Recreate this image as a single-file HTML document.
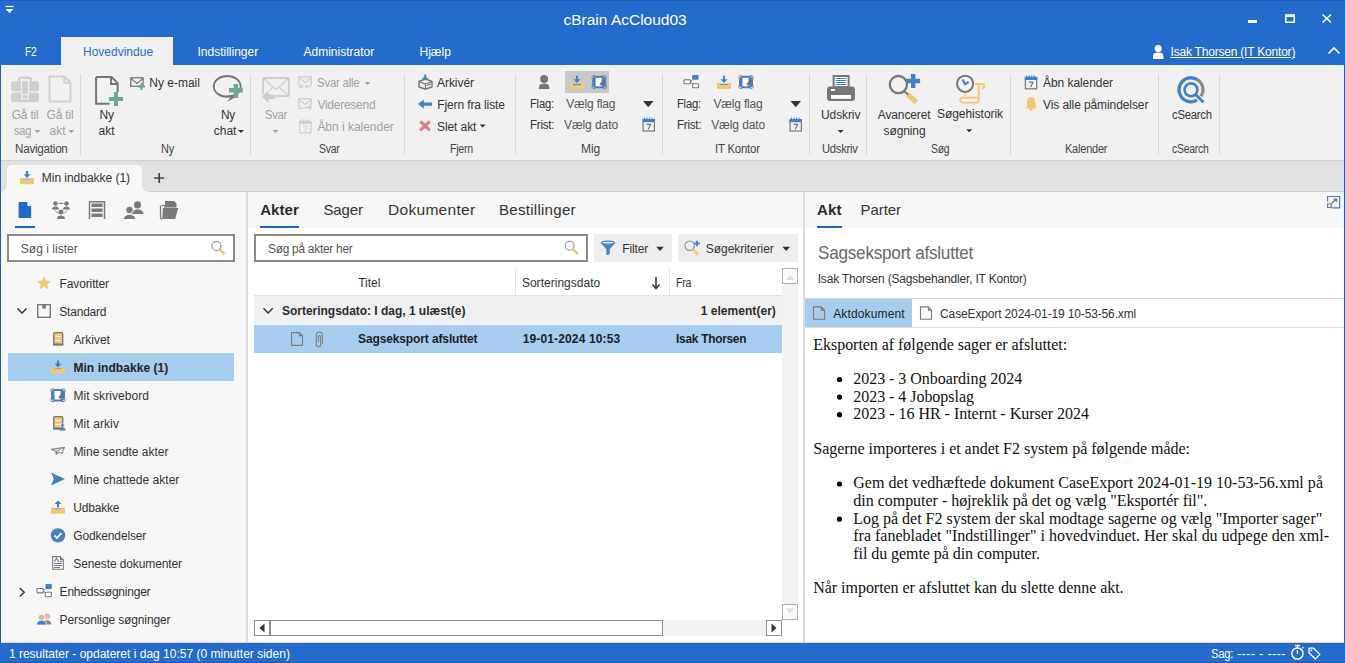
<!DOCTYPE html>
<html><head><meta charset="utf-8"><title>cBrain AcCloud03</title>
<style>
html,body{margin:0;padding:0;}
body{width:1345px;height:663px;overflow:hidden;position:relative;background:#fff;font-family:"Liberation Sans",sans-serif;}
.r{position:absolute;}
.t{position:absolute;white-space:nowrap;}
svg.ov{position:absolute;left:0;top:0;}
</style></head><body>
<div class="r" style="left:0px;top:0px;width:1345px;height:65px;background:#236ccb;"></div>
<div class="r" style="left:0px;top:0px;width:1345px;height:1px;background:#1d5db3;"></div>
<div class="r" style="left:61px;top:37px;width:112px;height:28px;background:#f1f1f1;"></div>
<div class="r" style="left:0px;top:65px;width:1345px;height:95px;background:#f1f1f1;"></div>
<div class="r" style="left:0px;top:160px;width:1345px;height:1px;background:#d0d0d0;"></div>
<div class="r" style="left:0px;top:161px;width:1345px;height:30px;background:#e1e1e1;"></div>
<div class="r" style="left:0px;top:191px;width:1345px;height:1px;background:#cbcbcb;"></div>
<div class="r" style="left:0px;top:192px;width:247px;height:451px;background:#f7f7f7;"></div>
<div class="r" style="left:246px;top:192px;width:2px;height:451px;background:#dcdcdc;"></div>
<div class="r" style="left:248px;top:192px;width:556px;height:451px;background:#ffffff;"></div>
<div class="r" style="left:248px;top:192px;width:556px;height:36px;background:#f7f7f7;"></div>
<div class="r" style="left:803px;top:192px;width:2px;height:451px;background:#dcdcdc;"></div>
<div class="r" style="left:805px;top:192px;width:540px;height:451px;background:#ffffff;"></div>
<div class="r" style="left:805px;top:192px;width:540px;height:36px;background:#f7f7f7;"></div>
<div class="r" style="left:0px;top:643px;width:1345px;height:20px;background:#236ccb;"></div>
<div class="r" style="left:0px;top:642px;width:1345px;height:1px;background:#dcd6cf;"></div>
<div class="r" style="left:0px;top:65px;width:1px;height:578px;background:#1d5db3;"></div>
<div class="r" style="left:1344px;top:65px;width:1px;height:578px;background:#1d5db3;"></div>
<div class="r" style="left:0px;top:662px;width:1345px;height:1px;background:#1d5db3;"></div>
<div class="t" style="left:563.5px;top:11.88px;font-size:15.5px;line-height:15.5px;color:#ffffff;font-weight:normal;font-family:'Liberation Sans';">cBrain AcCloud03</div>
<div class="r" style="left:1248px;top:20px;width:9px;height:3px;background:#ffffff;"></div>
<div class="t" style="left:24.6px;top:45.84px;font-size:12px;line-height:12px;color:#fff;font-weight:normal;font-family:'Liberation Sans';letter-spacing:-0.250px;transform:scaleX(0.8583);transform-origin:0 0;">F2</div>
<div class="t" style="left:83px;top:45.84px;font-size:12px;line-height:12px;color:#2b6fca;font-weight:normal;font-family:'Liberation Sans';">Hovedvindue</div>
<div class="t" style="left:197.5px;top:45.84px;font-size:12px;line-height:12px;color:#fff;font-weight:normal;font-family:'Liberation Sans';">Indstillinger</div>
<div class="t" style="left:303.5px;top:45.84px;font-size:12px;line-height:12px;color:#fff;font-weight:normal;font-family:'Liberation Sans';">Administrator</div>
<div class="t" style="left:419.5px;top:45.84px;font-size:12px;line-height:12px;color:#fff;font-weight:normal;font-family:'Liberation Sans';">Hjælp</div>
<div class="t" style="left:1170.5px;top:46.14px;font-size:12px;line-height:12px;color:#fff;font-weight:normal;font-family:'Liberation Sans';letter-spacing:-0.205px;text-decoration:underline">Isak Thorsen (IT Kontor)</div>
<div class="r" style="left:80px;top:74px;width:1px;height:81px;background:#d9d9d9;"></div>
<div class="r" style="left:250px;top:74px;width:1px;height:81px;background:#d9d9d9;"></div>
<div class="r" style="left:404px;top:74px;width:1px;height:81px;background:#d9d9d9;"></div>
<div class="r" style="left:515px;top:74px;width:1px;height:81px;background:#d9d9d9;"></div>
<div class="r" style="left:662px;top:74px;width:1px;height:81px;background:#d9d9d9;"></div>
<div class="r" style="left:809px;top:74px;width:1px;height:81px;background:#d9d9d9;"></div>
<div class="r" style="left:866px;top:74px;width:1px;height:81px;background:#d9d9d9;"></div>
<div class="r" style="left:1010px;top:74px;width:1px;height:81px;background:#d9d9d9;"></div>
<div class="r" style="left:1158px;top:74px;width:1px;height:81px;background:#d9d9d9;"></div>
<div class="r" style="left:1219px;top:74px;width:1px;height:81px;background:#d9d9d9;"></div>
<div class="t" style="left:14.7px;top:142.74px;font-size:12px;line-height:12px;color:#444444;font-weight:normal;font-family:'Liberation Sans';letter-spacing:-0.250px;transform:scaleX(0.9704);transform-origin:0 0;">Navigation</div>
<div class="t" style="left:160.8px;top:142.74px;font-size:12px;line-height:12px;color:#444444;font-weight:normal;font-family:'Liberation Sans';letter-spacing:-0.250px;transform:scaleX(0.9103);transform-origin:0 0;">Ny</div>
<div class="t" style="left:319px;top:142.74px;font-size:12px;line-height:12px;color:#444444;font-weight:normal;font-family:'Liberation Sans';letter-spacing:-0.250px;transform:scaleX(0.8697);transform-origin:0 0;">Svar</div>
<div class="t" style="left:450px;top:142.74px;font-size:12px;line-height:12px;color:#444444;font-weight:normal;font-family:'Liberation Sans';letter-spacing:-0.250px;transform:scaleX(0.8814);transform-origin:0 0;">Fjern</div>
<div class="t" style="left:581px;top:142.74px;font-size:12px;line-height:12px;color:#444444;font-weight:normal;font-family:'Liberation Sans';letter-spacing:-0.115px;">Mig</div>
<div class="t" style="left:715.3px;top:142.74px;font-size:12px;line-height:12px;color:#444444;font-weight:normal;font-family:'Liberation Sans';letter-spacing:-0.250px;transform:scaleX(0.9533);transform-origin:0 0;">IT Kontor</div>
<div class="t" style="left:822px;top:142.74px;font-size:12px;line-height:12px;color:#444444;font-weight:normal;font-family:'Liberation Sans';letter-spacing:-0.250px;transform:scaleX(0.9303);transform-origin:0 0;">Udskriv</div>
<div class="t" style="left:930.8px;top:142.74px;font-size:12px;line-height:12px;color:#444444;font-weight:normal;font-family:'Liberation Sans';letter-spacing:-0.250px;transform:scaleX(0.8652);transform-origin:0 0;">Søg</div>
<div class="t" style="left:1065px;top:142.74px;font-size:12px;line-height:12px;color:#444444;font-weight:normal;font-family:'Liberation Sans';letter-spacing:-0.250px;transform:scaleX(0.9186);transform-origin:0 0;">Kalender</div>
<div class="t" style="left:1172px;top:142.74px;font-size:12px;line-height:12px;color:#444444;font-weight:normal;font-family:'Liberation Sans';letter-spacing:-0.250px;transform:scaleX(0.8656);transform-origin:0 0;">cSearch</div>
<div class="t" style="left:11.7px;top:109.04px;font-size:12px;line-height:12px;color:#a0a0a0;font-weight:normal;font-family:'Liberation Sans';letter-spacing:-0.203px;transform:scaleX(1.0000);transform-origin:0 0;">Gå til</div>
<div class="t" style="left:13.7px;top:125.04px;font-size:12px;line-height:12px;color:#a0a0a0;font-weight:normal;font-family:'Liberation Sans';letter-spacing:-0.250px;transform:scaleX(0.9243);transform-origin:0 0;">sag</div>
<div class="t" style="left:46.5px;top:109.04px;font-size:12px;line-height:12px;color:#a0a0a0;font-weight:normal;font-family:'Liberation Sans';letter-spacing:-0.169px;">Gå til</div>
<div class="t" style="left:49.6px;top:125.04px;font-size:12px;line-height:12px;color:#a0a0a0;font-weight:normal;font-family:'Liberation Sans';letter-spacing:0.028px;">akt</div>
<div class="t" style="left:99.6px;top:109.04px;font-size:12px;line-height:12px;color:#333333;font-weight:normal;font-family:'Liberation Sans';letter-spacing:-0.136px;">Ny</div>
<div class="t" style="left:98.5px;top:125.04px;font-size:12px;line-height:12px;color:#333333;font-weight:normal;font-family:'Liberation Sans';letter-spacing:-0.005px;">akt</div>
<div class="t" style="left:149.3px;top:76.84px;font-size:12px;line-height:12px;color:#333333;font-weight:normal;font-family:'Liberation Sans';letter-spacing:-0.008px;">Ny e-mail</div>
<div class="t" style="left:221px;top:109.04px;font-size:12px;line-height:12px;color:#333333;font-weight:normal;font-family:'Liberation Sans';letter-spacing:-0.250px;transform:scaleX(0.9879);transform-origin:0 0;">Ny</div>
<div class="t" style="left:213.8px;top:125.04px;font-size:12px;line-height:12px;color:#333333;font-weight:normal;font-family:'Liberation Sans';letter-spacing:-0.047px;">chat</div>
<div class="t" style="left:265px;top:109.04px;font-size:12px;line-height:12px;color:#a0a0a0;font-weight:normal;font-family:'Liberation Sans';letter-spacing:-0.250px;transform:scaleX(0.9288);transform-origin:0 0;">Svar</div>
<div class="t" style="left:317.4px;top:76.84px;font-size:12px;line-height:12px;color:#a0a0a0;font-weight:normal;font-family:'Liberation Sans';letter-spacing:-0.250px;transform:scaleX(0.9564);transform-origin:0 0;">Svar alle</div>
<div class="t" style="left:317.4px;top:98.84px;font-size:12px;line-height:12px;color:#a0a0a0;font-weight:normal;font-family:'Liberation Sans';letter-spacing:-0.250px;transform:scaleX(1.0000);transform-origin:0 0;">Videresend</div>
<div class="t" style="left:317.4px;top:120.84px;font-size:12px;line-height:12px;color:#a0a0a0;font-weight:normal;font-family:'Liberation Sans';letter-spacing:-0.023px;">Åbn i kalender</div>
<div class="t" style="left:437px;top:76.84px;font-size:12px;line-height:12px;color:#333333;font-weight:normal;font-family:'Liberation Sans';letter-spacing:-0.049px;">Arkivér</div>
<div class="t" style="left:437.3px;top:98.84px;font-size:12px;line-height:12px;color:#333333;font-weight:normal;font-family:'Liberation Sans';letter-spacing:-0.124px;">Fjern fra liste</div>
<div class="t" style="left:437px;top:120.84px;font-size:12px;line-height:12px;color:#333333;font-weight:normal;font-family:'Liberation Sans';letter-spacing:-0.091px;">Slet akt</div>
<div class="r" style="left:565px;top:71px;width:44px;height:22px;background:#c8c8c8;"></div>
<div class="t" style="left:529.8px;top:97.84px;font-size:12px;line-height:12px;color:#333333;font-weight:normal;font-family:'Liberation Sans';letter-spacing:-0.250px;transform:scaleX(0.9356);transform-origin:0 0;">Flag:</div>
<div class="t" style="left:566.3px;top:97.84px;font-size:12px;line-height:12px;color:#555;font-weight:normal;font-family:'Liberation Sans';letter-spacing:-0.189px;">Vælg flag</div>
<div class="t" style="left:529.8px;top:118.64px;font-size:12px;line-height:12px;color:#333333;font-weight:normal;font-family:'Liberation Sans';letter-spacing:-0.250px;transform:scaleX(0.9614);transform-origin:0 0;">Frist:</div>
<div class="t" style="left:564px;top:118.64px;font-size:12px;line-height:12px;color:#555;font-weight:normal;font-family:'Liberation Sans';letter-spacing:-0.078px;">Vælg dato</div>
<div class="t" style="left:676.9px;top:97.84px;font-size:12px;line-height:12px;color:#333333;font-weight:normal;font-family:'Liberation Sans';letter-spacing:-0.250px;transform:scaleX(0.9356);transform-origin:0 0;">Flag:</div>
<div class="t" style="left:713.5px;top:97.84px;font-size:12px;line-height:12px;color:#555;font-weight:normal;font-family:'Liberation Sans';letter-spacing:-0.189px;">Vælg flag</div>
<div class="t" style="left:676.9px;top:118.64px;font-size:12px;line-height:12px;color:#333333;font-weight:normal;font-family:'Liberation Sans';letter-spacing:-0.250px;transform:scaleX(0.9614);transform-origin:0 0;">Frist:</div>
<div class="t" style="left:711.2px;top:118.64px;font-size:12px;line-height:12px;color:#555;font-weight:normal;font-family:'Liberation Sans';letter-spacing:-0.078px;">Vælg dato</div>
<div class="t" style="left:821px;top:109.04px;font-size:12px;line-height:12px;color:#333333;font-weight:normal;font-family:'Liberation Sans';letter-spacing:-0.102px;">Udskriv</div>
<div class="t" style="left:877.8px;top:109.04px;font-size:12px;line-height:12px;color:#333333;font-weight:normal;font-family:'Liberation Sans';letter-spacing:-0.135px;">Avanceret</div>
<div class="t" style="left:883.5px;top:125.04px;font-size:12px;line-height:12px;color:#333333;font-weight:normal;font-family:'Liberation Sans';letter-spacing:-0.100px;">søgning</div>
<div class="t" style="left:937px;top:108.34px;font-size:12px;line-height:12px;color:#333333;font-weight:normal;font-family:'Liberation Sans';letter-spacing:-0.059px;">Søgehistorik</div>
<div class="t" style="left:1043px;top:76.84px;font-size:12px;line-height:12px;color:#333333;font-weight:normal;font-family:'Liberation Sans';letter-spacing:-0.060px;">Åbn kalender</div>
<div class="t" style="left:1043px;top:98.84px;font-size:12px;line-height:12px;color:#333333;font-weight:normal;font-family:'Liberation Sans';letter-spacing:-0.094px;">Vis alle påmindelser</div>
<div class="t" style="left:1171.5px;top:109.04px;font-size:12px;line-height:12px;color:#333333;font-weight:normal;font-family:'Liberation Sans';letter-spacing:-0.250px;transform:scaleX(0.9413);transform-origin:0 0;">cSearch</div>
<svg class="ov" width="1345" height="663" viewBox="0 0 1345 663"><path d="M1 191.5C5 191.5 6.5 189 6.5 185V171C6.5 167 9 164.5 13 164.5H136C140 164.5 142.5 167 142.5 171V185C142.5 189 144 191.5 150 191.5" fill="none" stroke="#cfcfcf" stroke-width="1"/><path d="M1 192V191.5C5 191.5 6.5 189 6.5 185V171C6.5 167 9 164.5 13 164.5H136C140 164.5 142.5 167 142.5 171V185C142.5 189 144 191.5 150 191.5V192z" fill="#f7f7f7"/></svg>
<div class="t" style="left:41.8px;top:171.64px;font-size:12px;line-height:12px;color:#333333;font-weight:normal;font-family:'Liberation Sans';letter-spacing:-0.032px;">Min indbakke (1)</div>
<div class="r" style="left:15px;top:226px;width:20px;height:2px;background:#1f63d0;"></div>
<div class="r" style="left:7px;top:234px;width:228px;height:28px;background:#ffffff;box-sizing:border-box;border:2px solid #8a8a8a"></div>
<div class="t" style="left:20.8px;top:243.14px;font-size:12px;line-height:12px;color:#555;font-weight:normal;font-family:'Liberation Sans';letter-spacing:0.026px;">Søg i lister</div>
<div class="t" style="left:59.5px;top:277.84px;font-size:12px;line-height:12px;color:#333333;font-weight:normal;font-family:'Liberation Sans';letter-spacing:-0.119px;">Favoritter</div>
<div class="t" style="left:59.3px;top:305.84px;font-size:12px;line-height:12px;color:#333333;font-weight:normal;font-family:'Liberation Sans';letter-spacing:-0.213px;">Standard</div>
<div class="r" style="left:8px;top:353px;width:226px;height:28px;background:#a6cdee;"></div>
<div class="t" style="left:73.4px;top:333.84px;font-size:12px;line-height:12px;color:#333333;font-weight:normal;font-family:'Liberation Sans';letter-spacing:-0.027px;">Arkivet</div>
<div class="t" style="left:73.4px;top:361.84px;font-size:12px;line-height:12px;color:#222;font-weight:bold;font-family:'Liberation Sans';letter-spacing:0.062px;">Min indbakke (1)</div>
<div class="t" style="left:73.4px;top:389.84px;font-size:12px;line-height:12px;color:#333333;font-weight:normal;font-family:'Liberation Sans';letter-spacing:0.072px;">Mit skrivebord</div>
<div class="t" style="left:73.4px;top:417.84px;font-size:12px;line-height:12px;color:#333333;font-weight:normal;font-family:'Liberation Sans';letter-spacing:0.103px;">Mit arkiv</div>
<div class="t" style="left:73.4px;top:445.84px;font-size:12px;line-height:12px;color:#333333;font-weight:normal;font-family:'Liberation Sans';letter-spacing:-0.023px;">Mine sendte akter</div>
<div class="t" style="left:73.4px;top:473.84px;font-size:12px;line-height:12px;color:#333333;font-weight:normal;font-family:'Liberation Sans';letter-spacing:0.031px;">Mine chattede akter</div>
<div class="t" style="left:73.3px;top:501.84px;font-size:12px;line-height:12px;color:#333333;font-weight:normal;font-family:'Liberation Sans';letter-spacing:-0.196px;">Udbakke</div>
<div class="t" style="left:73.3px;top:529.84px;font-size:12px;line-height:12px;color:#333333;font-weight:normal;font-family:'Liberation Sans';letter-spacing:-0.160px;">Godkendelser</div>
<div class="t" style="left:73.3px;top:557.84px;font-size:12px;line-height:12px;color:#333333;font-weight:normal;font-family:'Liberation Sans';letter-spacing:-0.114px;">Seneste dokumenter</div>
<div class="t" style="left:59.6px;top:585.84px;font-size:12px;line-height:12px;color:#333333;font-weight:normal;font-family:'Liberation Sans';letter-spacing:-0.218px;">Enhedssøgninger</div>
<div class="t" style="left:59.6px;top:613.84px;font-size:12px;line-height:12px;color:#333333;font-weight:normal;font-family:'Liberation Sans';letter-spacing:-0.130px;">Personlige søgninger</div>
<div class="t" style="left:260.2px;top:201.50px;font-size:15px;line-height:15px;color:#2b2b2b;font-weight:bold;font-family:'Liberation Sans';letter-spacing:0.088px;">Akter</div>
<div class="r" style="left:260px;top:226px;width:39px;height:2px;background:#1f63d0;"></div>
<div class="t" style="left:323.5px;top:201.50px;font-size:15px;line-height:15px;color:#333;font-weight:normal;font-family:'Liberation Sans';letter-spacing:-0.146px;">Sager</div>
<div class="t" style="left:387.5px;top:201.50px;font-size:15px;line-height:15px;color:#333;font-weight:normal;font-family:'Liberation Sans';letter-spacing:0.250px;transform:scaleX(1.0380);transform-origin:0 0;">Dokumenter</div>
<div class="t" style="left:499.2px;top:201.50px;font-size:15px;line-height:15px;color:#333;font-weight:normal;font-family:'Liberation Sans';letter-spacing:0.250px;transform:scaleX(1.0056);transform-origin:0 0;">Bestillinger</div>
<div class="r" style="left:254px;top:234px;width:334px;height:28px;background:#ffffff;box-sizing:border-box;border:2px solid #8a8a8a"></div>
<div class="t" style="left:268.1px;top:243.14px;font-size:12px;line-height:12px;color:#555;font-weight:normal;font-family:'Liberation Sans';letter-spacing:-0.250px;transform:scaleX(0.9896);transform-origin:0 0;">Søg på akter her</div>
<div class="r" style="left:594px;top:234px;width:78px;height:28px;background:#eeeeee;"></div>
<div class="t" style="left:622.3px;top:243.14px;font-size:12px;line-height:12px;color:#333333;font-weight:normal;font-family:'Liberation Sans';letter-spacing:-0.162px;">Filter</div>
<div class="r" style="left:678px;top:234px;width:120px;height:28px;background:#eeeeee;"></div>
<div class="t" style="left:705.8px;top:243.14px;font-size:12px;line-height:12px;color:#333333;font-weight:normal;font-family:'Liberation Sans';letter-spacing:-0.053px;">Søgekriterier</div>
<div class="t" style="left:358.2px;top:276.64px;font-size:12px;line-height:12px;color:#333333;font-weight:normal;font-family:'Liberation Sans';letter-spacing:0.013px;">Titel</div>
<div class="r" style="left:515px;top:268px;width:1px;height:27px;background:#e3e3e3;"></div>
<div class="t" style="left:521.9px;top:276.64px;font-size:12px;line-height:12px;color:#333333;font-weight:normal;font-family:'Liberation Sans';letter-spacing:0.025px;">Sorteringsdato</div>
<div class="r" style="left:669px;top:268px;width:1px;height:27px;background:#e3e3e3;"></div>
<div class="t" style="left:676.4px;top:276.64px;font-size:12px;line-height:12px;color:#333333;font-weight:normal;font-family:'Liberation Sans';letter-spacing:-0.250px;transform:scaleX(0.8812);transform-origin:0 0;">Fra</div>
<div class="r" style="left:254px;top:295px;width:528px;height:1px;background:#e3e3e3;"></div>
<div class="r" style="left:254px;top:296px;width:528px;height:29px;background:#f0f0f0;"></div>
<div class="t" style="left:282px;top:304.84px;font-size:12px;line-height:12px;color:#2b2b2b;font-weight:bold;font-family:'Liberation Sans';letter-spacing:-0.019px;">Sorteringsdato: I dag, 1 ulæst(e)</div>
<div class="t" style="left:700.7px;top:304.84px;font-size:12px;line-height:12px;color:#2b2b2b;font-weight:bold;font-family:'Liberation Sans';letter-spacing:0.038px;">1 element(er)</div>
<div class="r" style="left:254px;top:325px;width:528px;height:28px;background:#a6cdee;"></div>
<div class="t" style="left:358px;top:333.34px;font-size:12px;line-height:12px;color:#1e1e1e;font-weight:bold;font-family:'Liberation Sans';letter-spacing:-0.121px;">Sagseksport afsluttet</div>
<div class="t" style="left:522.7px;top:333.34px;font-size:12px;line-height:12px;color:#1e1e1e;font-weight:bold;font-family:'Liberation Sans';letter-spacing:0.142px;">19-01-2024 10:53</div>
<div class="t" style="left:676.2px;top:333.34px;font-size:12px;line-height:12px;color:#1e1e1e;font-weight:bold;font-family:'Liberation Sans';letter-spacing:-0.250px;transform:scaleX(0.9883);transform-origin:0 0;">Isak Thorsen</div>
<div class="r" style="left:782px;top:284px;width:16px;height:320px;background:#f2f2f2;"></div>
<div class="r" style="left:782px;top:268px;width:16px;height:16px;background:#fafafa;box-sizing:border-box;border:1px solid #b4b4b4"></div>
<div class="r" style="left:782px;top:604px;width:16px;height:16px;background:#fafafa;box-sizing:border-box;border:1px solid #b4b4b4"></div>
<div class="r" style="left:254px;top:620px;width:528px;height:16px;background:#f2f2f2;"></div>
<div class="r" style="left:254px;top:620px;width:16px;height:16px;background:#ffffff;box-sizing:border-box;border:1px solid #8f8f8f"></div>
<div class="r" style="left:270px;top:620px;width:393px;height:16px;background:#ffffff;box-sizing:border-box;border:1px solid #8f8f8f"></div>
<div class="r" style="left:766px;top:620px;width:16px;height:16px;background:#ffffff;box-sizing:border-box;border:1px solid #8f8f8f"></div>
<div class="t" style="left:817.1px;top:201.50px;font-size:15px;line-height:15px;color:#2b2b2b;font-weight:bold;font-family:'Liberation Sans';letter-spacing:0.176px;">Akt</div>
<div class="r" style="left:817px;top:226px;width:25px;height:2px;background:#1f63d0;"></div>
<div class="t" style="left:860.6px;top:201.50px;font-size:15px;line-height:15px;color:#333;font-weight:normal;font-family:'Liberation Sans';letter-spacing:-0.077px;">Parter</div>
<div class="t" style="left:817.7px;top:244.69px;font-size:17.5px;line-height:17.5px;color:#6a6a6a;font-weight:normal;font-family:'Liberation Sans';letter-spacing:-0.250px;transform:scaleX(0.9799);transform-origin:0 0;">Sagseksport afsluttet</div>
<div class="t" style="left:817.7px;top:272.84px;font-size:12px;line-height:12px;color:#333333;font-weight:normal;font-family:'Liberation Sans';letter-spacing:-0.189px;">Isak Thorsen (Sagsbehandler, IT Kontor)</div>
<div class="r" style="left:805px;top:298px;width:539px;height:1px;background:#d9d9d9;"></div>
<div class="r" style="left:805px;top:299px;width:107px;height:28px;background:#a6cdee;"></div>
<div class="r" style="left:805px;top:327px;width:539px;height:1px;background:#dddddd;"></div>
<div class="t" style="left:833.2px;top:307.74px;font-size:12px;line-height:12px;color:#1e1e1e;font-weight:normal;font-family:'Liberation Sans';letter-spacing:0.141px;">Aktdokument</div>
<div class="t" style="left:940.1px;top:307.74px;font-size:12px;line-height:12px;color:#333333;font-weight:normal;font-family:'Liberation Sans';letter-spacing:-0.141px;">CaseExport 2024-01-19 10-53-56.xml</div>
<div class="t" style="left:813.3px;top:337.00px;font-size:16px;line-height:16px;color:#111;font-weight:normal;font-family:'Liberation Serif';letter-spacing:-0.040px;">Eksporten af følgende sager er afsluttet:</div>
<div class="t" style="left:853.3px;top:370.90px;font-size:16px;line-height:16px;color:#111;font-weight:normal;font-family:'Liberation Serif';letter-spacing:-0.036px;">2023 - 3 Onboarding 2024</div>
<div class="t" style="left:853.3px;top:388.50px;font-size:16px;line-height:16px;color:#111;font-weight:normal;font-family:'Liberation Serif';letter-spacing:-0.040px;">2023 - 4 Jobopslag</div>
<div class="t" style="left:853.3px;top:406.10px;font-size:16px;line-height:16px;color:#111;font-weight:normal;font-family:'Liberation Serif';letter-spacing:-0.020px;">2023 - 16 HR - Internt - Kurser 2024</div>
<div class="t" style="left:813.3px;top:440.90px;font-size:16px;line-height:16px;color:#111;font-weight:normal;font-family:'Liberation Serif';letter-spacing:-0.026px;">Sagerne importeres i et andet F2 system på følgende måde:</div>
<div class="t" style="left:853.3px;top:475.40px;font-size:16px;line-height:16px;color:#111;font-weight:normal;font-family:'Liberation Serif';letter-spacing:0.021px;">Gem det vedhæftede dokument CaseExport 2024-01-19 10-53-56.xml på</div>
<div class="t" style="left:853.3px;top:493.00px;font-size:16px;line-height:16px;color:#111;font-weight:normal;font-family:'Liberation Serif';letter-spacing:-0.022px;">din computer - højreklik på det og vælg "Eksportér fil".</div>
<div class="t" style="left:853.3px;top:510.60px;font-size:16px;line-height:16px;color:#111;font-weight:normal;font-family:'Liberation Serif';letter-spacing:-0.012px;">Log på det F2 system der skal modtage sagerne og vælg "Importer sager"</div>
<div class="t" style="left:853.3px;top:528.20px;font-size:16px;line-height:16px;color:#111;font-weight:normal;font-family:'Liberation Serif';letter-spacing:-0.011px;">fra fanebladet "Indstillinger" i hovedvinduet. Her skal du udpege den xml-</div>
<div class="t" style="left:853.3px;top:545.80px;font-size:16px;line-height:16px;color:#111;font-weight:normal;font-family:'Liberation Serif';letter-spacing:-0.062px;">fil du gemte på din computer.</div>
<div class="t" style="left:813.3px;top:580.30px;font-size:16px;line-height:16px;color:#111;font-weight:normal;font-family:'Liberation Serif';letter-spacing:-0.041px;">Når importen er afsluttet kan du slette denne akt.</div>
<div class="t" style="left:8.9px;top:647.84px;font-size:12px;line-height:12px;color:#fff;font-weight:normal;font-family:'Liberation Sans';letter-spacing:0.003px;">1 resultater - opdateret i dag 10:57 (0 minutter siden)</div>
<div class="t" style="left:1211.3px;top:647.84px;font-size:12px;line-height:12px;color:#fff;font-weight:normal;font-family:'Liberation Sans';letter-spacing:-0.250px;transform:scaleX(0.9288);transform-origin:0 0;">Sag:</div>
<div class="t" style="left:1237px;top:647.84px;font-size:12px;line-height:12px;color:#fff;font-weight:normal;font-family:'Liberation Sans';letter-spacing:0.250px;transform:scaleX(1.0729);transform-origin:0 0;">---- - ----</div>
<svg class="ov" width="1345" height="663" viewBox="0 0 1345 663">
<path d="M5.5 6.5h8" stroke="#fff" stroke-width="1.2"/><path d="M5.5 9h8L9.5 13z" fill="#fff"/>
<rect x="1285.75" y="15.25" width="8.5" height="7" fill="none" stroke="#fff" stroke-width="1.5"/><rect x="1285" y="14.5" width="10" height="2.5" fill="#fff"/>
<path d="M1322.5 14.5L1331 22.5M1331 14.5L1322.5 22.5" stroke="#fff" stroke-width="1.5"/>
<circle cx="1158.2" cy="48.6" r="3.5" fill="#fff"/><path d="M1153 59v-3C1153 53.6 1155 52.6 1158.2 52.6S1163.4 53.6 1163.4 56V59z" fill="#fff"/>
<path d="M1328.5 53.5L1334 48L1339.5 53.5" fill="none" stroke="#fff" stroke-width="1.6"/>
<rect x="19" y="77.8" width="12" height="5" rx="2" fill="none" stroke="#cfcfcf" stroke-width="2"/>
<rect x="11" y="81.2" width="28" height="10" rx="2.5" fill="#cfcfcf"/><rect x="11" y="92.6" width="28" height="9.7" rx="2.5" fill="#cfcfcf"/>
<rect x="21.5" y="80.5" width="7" height="14" fill="#cfcfcf" stroke="#f1f1f1" stroke-width="1.2"/><rect x="22" y="94.5" width="6" height="4.5" fill="#cfcfcf" stroke="#f1f1f1" stroke-width="1.2"/>
<path d="M49.5 76.5h15l6 6v19h-21z" fill="none" stroke="#cfcfcf" stroke-width="2"/><path d="M64.3 77v5.7h6" fill="none" stroke="#cfcfcf" stroke-width="2"/>
<path d="M34.5 130.0h6l-3 3z" fill="#a0a0a0"/>
<path d="M68.4 130.0h6l-3 3z" fill="#a0a0a0"/>
<path d="M96.1 77h15.5l6.1 6.1V92M109.5 103.8H96.1V77" fill="none" stroke="#767676" stroke-width="2"/><path d="M111 77.5v6.5h6.5" fill="none" stroke="#767676" stroke-width="2"/>
<path d="M109 99.1h14M116 92v14" stroke="#6aa78f" stroke-width="4"/>
<rect x="130.8" y="77.8" width="12.3" height="8.5" fill="none" stroke="#767676" stroke-width="1.3"/><path d="M131 78.5l6 5 6-5" fill="none" stroke="#767676" stroke-width="1.1"/>
<path d="M138 86.5h7M141.5 83v7" stroke="#6aa78f" stroke-width="2"/>
<ellipse cx="227.2" cy="86.4" rx="13.4" ry="10.4" fill="none" stroke="#767676" stroke-width="1.9"/><path d="M225.5 95.8L230.5 97.6L227.2 101.8L235 97.5L233 95z" fill="#767676"/><path d="M226 96.3L229.8 97.4" stroke="#f1f1f1" stroke-width="0"/>
<path d="M229 90.3h13.8M235.9 84.1v13.8" stroke="#6aa78f" stroke-width="4.4"/>
<path d="M238 130.0h6l-3 3z" fill="#333"/>
<rect x="263" y="78" width="26" height="18" rx="1" fill="none" stroke="#cfcfcf" stroke-width="2"/><path d="M264 79l12 10.5L288 79M264 95l8-7M288 95l-8-7" fill="none" stroke="#cfcfcf" stroke-width="1.5"/>
<path d="M261.3 96.8L269.2 89.6V94.1H275.8V99.5H269.2V104z" fill="#cfcfcf" stroke="#f1f1f1" stroke-width="1"/>
<path d="M272.5 130.0h6l-3 3z" fill="#a0a0a0"/>
<rect x="298.8" y="76.8" width="12.4" height="9.5" fill="none" stroke="#cfcfcf" stroke-width="1.3"/><path d="M299 77.5l6.2 5 6.2-5" fill="none" stroke="#cfcfcf" stroke-width="1.1"/>
<rect x="298.8" y="98.8" width="12.4" height="9.5" fill="none" stroke="#cfcfcf" stroke-width="1.3"/><path d="M299 99.5l6.2 5 6.2-5" fill="none" stroke="#cfcfcf" stroke-width="1.1"/>
<path d="M298.3 86.6L302 83.4V85.5H305V87.7H302V89.8zM303.6 86.6L307.3 83.4V85.5H310.5V87.7H307.3V89.8z" fill="#cfcfcf" stroke="#f1f1f1" stroke-width="0.8"/>
<path d="M312.3 107.5L308.5 104.1V106.3H304V108.7H308.5V110.9z" fill="#cfcfcf" stroke="#f1f1f1" stroke-width="0.8"/>
<rect x="299.6" y="122.3" width="11.3" height="10.5" fill="none" stroke="#cfcfcf" stroke-width="1.2"/><rect x="299" y="120.8" width="12.5" height="3.2" fill="#cfcfcf"/><path d="M301 119.3v2.5M303.5 119.3v2.5M306 119.3v2.5M308.5 119.3v2.5" stroke="#cfcfcf" stroke-width="1"/><path d="M303 126.1h4.3l-2.6 5" fill="none" stroke="#cfcfcf" stroke-width="1"/>
<path d="M364.5 82.0h6l-3 3z" fill="#a0a0a0"/>
<path d="M419 81.5l6.5-2.7 6.5 2.7v5.5l-6.5 2.2-6.5-2.2z" fill="none" stroke="#767676" stroke-width="1.4"/><path d="M419 81.5l6.5 2.5 6.5-2.5M425.5 84v5.2M427 85.5l4-1.5" fill="none" stroke="#767676" stroke-width="1.2"/>
<path d="M425.2 74.5v4" stroke="#4580c2" stroke-width="2"/><path d="M422 77.5h6.5l-3.2 3.2z" fill="#4580c2"/>
<path d="M418 104.1L423.8 99.4V102.4H432V105.8H423.8V108.8z" fill="#4580c2"/>
<path d="M420.3 121.3l9.5 9M429.8 121.3l-9.5 9" stroke="#e07b90" stroke-width="3.2"/>
<path d="M479.6 124.5h6l-3 3z" fill="#333"/>
<circle cx="544.1" cy="79" r="4" fill="#777"/><path d="M539 89v-1.8C539 84.5 541 83.5 544.1 83.5S549.2 84.5 549.2 87.2V89z" fill="#777"/>
<path d="M577 75.8v5" stroke="#4580c2" stroke-width="2"/><path d="M573.5 79.3h7l-3.5 3.6z" fill="#4580c2"/><path d="M570 83.0h3v2.4h8v-2.4h3v6h-14z" fill="#efc878"/><rect x="573" y="83.8" width="8" height="1.5" fill="#8c8c8c"/>
<path d="M595.2 75.8h8l3 3v6.5l-3 3h-8l-3-3v-6.5z" fill="#4580c2"/><rect x="595.7" y="77.8" width="6" height="8.5" fill="#fff"/><path d="M600.2 84.8l4-4.5" stroke="#6e6e6e" stroke-width="2"/><path d="M592.2 78.8v-2.3l0.7-0.7h2.3M606.2 78.8v-2.3l-0.7-0.7h-2.3M592.2 85.3v2.3l0.7 0.7h2.3M606.2 85.3v2.3l-0.7 0.7h-2.3" fill="none" stroke="#777" stroke-width="1"/>
<path d="M643 101h10.5l-5.25 6.3z" fill="#333"/>
<rect x="643.1" y="120.5" width="11.3" height="10.5" fill="none" stroke="#777" stroke-width="1.2"/><rect x="642.5" y="119.0" width="12.5" height="3.2" fill="#4580c2"/><path d="M644.5 117.5v2.5M647.0 117.5v2.5M649.5 117.5v2.5M652.0 117.5v2.5" stroke="#4580c2" stroke-width="1"/><path d="M646.5 124.3h4.3l-2.6 5" fill="none" stroke="#555" stroke-width="1"/>
<rect x="692.1" y="75" width="6.5" height="4.7" rx="1" fill="#4580c2"/><rect x="684" y="79.7" width="6.5" height="4" rx="0.8" fill="#fff" stroke="#777" stroke-width="1.1"/><rect x="692.6" y="83.8" width="6" height="4" rx="0.8" fill="#fff" stroke="#777" stroke-width="1.1"/><path d="M690.5 81.7l2-2.3M690.5 81.7l2 2.3" stroke="#777" stroke-width="0.9"/>
<path d="M724 75.8v5" stroke="#4580c2" stroke-width="2"/><path d="M720.5 79.3h7l-3.5 3.6z" fill="#4580c2"/><path d="M717 83.0h3v2.4h8v-2.4h3v6h-14z" fill="#efc878"/><rect x="720" y="83.8" width="8" height="1.5" fill="#8c8c8c"/>
<path d="M742 75.8h8l3 3v6.5l-3 3h-8l-3-3v-6.5z" fill="#4580c2"/><rect x="742.5" y="77.8" width="6" height="8.5" fill="#fff"/><path d="M747 84.8l4-4.5" stroke="#6e6e6e" stroke-width="2"/><path d="M739 78.8v-2.3l0.7-0.7h2.3M753 78.8v-2.3l-0.7-0.7h-2.3M739 85.3v2.3l0.7 0.7h2.3M753 85.3v2.3l-0.7 0.7h-2.3" fill="none" stroke="#777" stroke-width="1"/>
<path d="M790.5 101h10.5l-5.25 6.3z" fill="#333"/>
<rect x="790.1" y="120.5" width="11.3" height="10.5" fill="none" stroke="#777" stroke-width="1.2"/><rect x="789.5" y="119.0" width="12.5" height="3.2" fill="#4580c2"/><path d="M791.5 117.5v2.5M794.0 117.5v2.5M796.5 117.5v2.5M799.0 117.5v2.5" stroke="#4580c2" stroke-width="1"/><path d="M793.5 124.3h4.3l-2.6 5" fill="none" stroke="#555" stroke-width="1"/>
<rect x="833.6" y="76" width="15" height="11" fill="#fff" stroke="#777" stroke-width="2"/><path d="M835.5 78.5h11M835.5 80.5h11M835.5 82.5h11M835.5 84.5h11" stroke="#4580c2" stroke-width="1"/>
<rect x="827" y="86.4" width="28" height="14.6" rx="3" fill="#777"/><rect x="831" y="95" width="20" height="3.8" fill="#fff"/><rect x="831" y="89" width="4" height="2" fill="#fff"/>
<path d="M837.7 129.9h6l-3 3z" fill="#333"/>
<circle cx="898.4" cy="84.6" r="8.6" fill="none" stroke="#777" stroke-width="2.3"/>
<path d="M907.8 94.3l8.6 8" stroke="#efc878" stroke-width="5" stroke-linecap="butt"/><path d="M904.3 91.2l4 3.6" stroke="#777" stroke-width="2.2"/>
<path d="M906.2 81h13.9M913.2 74v14" stroke="#4580c2" stroke-width="4.4"/>
<path d="M975.3 84H981.8C983.6 84 984.4 85.2 984.4 86.3C984.4 87.6 983.4 88.4 981.8 88.4" fill="none" stroke="#efc878" stroke-width="1.9"/><path d="M978.7 84.5V100.2C978.7 101.8 977.7 102.6 976.2 102.6H962.6C961.2 102.6 960.3 101.6 960.3 100.1C960.3 98.6 961.2 97.8 962.6 97.8H977" fill="none" stroke="#efc878" stroke-width="1.9"/><rect x="964.2" y="94.2" width="1.7" height="1.7" fill="#efc878"/>
<circle cx="965.1" cy="83.8" r="8.1" fill="#f1f1f1" stroke="#777" stroke-width="2"/><path d="M962.5 79.6L965.2 84.2L968.6 82" fill="none" stroke="#4580c2" stroke-width="2.2" stroke-linejoin="round"/>
<path d="M966.2 129.2h6l-3 3z" fill="#333"/>
<rect x="1025.3999999999999" y="78.3" width="11.3" height="10.5" fill="none" stroke="#777" stroke-width="1.2"/><rect x="1024.8" y="76.8" width="12.5" height="3.2" fill="#4580c2"/><path d="M1026.8 75.3v2.5M1029.3 75.3v2.5M1031.8 75.3v2.5M1034.3 75.3v2.5" stroke="#4580c2" stroke-width="1"/><path d="M1028.8 82.1h4.3l-2.6 5" fill="none" stroke="#555" stroke-width="1"/>
<path d="M1031.2 97c-3 0-4.2 2.6-4.2 5.5v3.5l-1.5 2.5h11.4l-1.5-2.5v-3.5c0-2.9-1.2-5.5-4.2-5.5z" fill="#efc878"/><circle cx="1031.2" cy="109.5" r="1.6" fill="#efc878"/>
<path d="M1197.07 100.15A12 12 0 1 1 1197.43 79.67" fill="none" stroke="#4580c2" stroke-width="3.2"/><path d="M1197.43 79.67A12 12 0 0 1 1201.11 96.26" fill="none" stroke="#8a8a8a" stroke-width="3.2"/>
<circle cx="1191" cy="89.8" r="6.4" fill="none" stroke="#4580c2" stroke-width="2.6"/><path d="M1195.5 94.5l8 7.8" stroke="#4580c2" stroke-width="3"/>
<path d="M27 171V175.5" stroke="#4580c2" stroke-width="2.2"/><path d="M23.6 174.3h6.8L27 177.9z" fill="#4580c2"/><path d="M20 178h3.2l0.8 1.6h6l0.8-1.6h3.2v6.3h-14z" fill="#efc878"/><path d="M23.2 178.4h7.6l-0.8 1.4h-6z" fill="#a8a8a8"/>
<path d="M154.2 178h10M159.2 173v10" stroke="#444" stroke-width="1.7"/>
<path d="M18.6 202.1h9l3.6 3.6V218H18.6z" fill="#2467cc"/><path d="M27.6 202.1v3.6h3.6" fill="#fff" stroke="#fff" stroke-width="0.6"/>
<g fill="#7a7a7a"><circle cx="55.5" cy="203.5" r="2.3"/><path d="M52 209.5c0-2 1.3-3 3.5-3s3.5 1 3.5 3z"/><circle cx="66.5" cy="203.5" r="2.3"/><path d="M63 209.5c0-2 1.3-3 3.5-3s3.5 1 3.5 3z"/><circle cx="61" cy="212" r="2.5"/><path d="M57 219c0-2.5 1.5-3.5 4-3.5s4 1 4 3.5z"/></g><path d="M58.5 203.5h5M55 210.5l3 3M67 210.5l-3 3" stroke="#7a7a7a" stroke-width="1"/>
<path d="M89.5 219V201.7h15V219" fill="none" stroke="#7a7a7a" stroke-width="1.5"/><rect x="91.5" y="203.5" width="11" height="3.5" fill="#7a7a7a"/><rect x="91.5" y="208.5" width="11" height="3.5" fill="#7a7a7a"/><rect x="91.5" y="213.5" width="11" height="3.5" fill="#7a7a7a"/>
<g fill="#7a7a7a"><circle cx="137.5" cy="204.8" r="3.6"/><path d="M131.5 214c0-3 2.5-4.5 6-4.5s6 1.5 6 4.5z"/><circle cx="129.5" cy="210" r="3.8" stroke="#f7f7f7" stroke-width="1"/><path d="M123.5 219.5c0-3.5 2.5-5 6-5s6 1.5 6 5z" stroke="#f7f7f7" stroke-width="1"/></g>
<path d="M165 201h9l2.5 2.5v4h-11.5z" fill="#7a7a7a"/><path d="M160.5 205.5v11.5c0 1 0.8 2 1.8 2" fill="none" stroke="#7a7a7a" stroke-width="1.3"/><path d="M163 208h15.2l-3 11h-13z" fill="#7a7a7a"/><path d="M161.5 205.5h3.5v2.5" fill="none" stroke="#7a7a7a" stroke-width="1.2"/>
<circle cx="216.5" cy="246" r="4.5" fill="none" stroke="#8c8c8c" stroke-width="1.1"/><path d="M219.8 249.6l4.8 4.6" stroke="#efc878" stroke-width="2.6"/>
<path d="M44 276.2l2.1 4.4 4.9 0.5-3.7 3.3 1.1 4.9-4.4-2.6-4.4 2.6 1.1-4.9-3.7-3.3 4.9-0.5z" fill="#efc878"/>
<path d="M17.5 308.5l4.5 4.6 4.5-4.6" fill="none" stroke="#333" stroke-width="1.4"/>
<rect x="37.7" y="304.7" width="12.6" height="12.6" fill="none" stroke="#777" stroke-width="1.4"/><rect x="42.3" y="304.8" width="3.6" height="3.8" fill="#777"/>
<rect x="53.7" y="332.7" width="9" height="12" rx="1" fill="#efc878" stroke="#777" stroke-width="1.3"/><path d="M55.5 336.5h5.5M55.5 340.5h5.5" stroke="#fff" stroke-width="0.9"/><rect x="53" y="343.5" width="10.5" height="2" fill="#777"/>
<path d="M58 360.5V365.0" stroke="#4580c2" stroke-width="2.2"/><path d="M54.6 363.8h6.8L58 367.4z" fill="#4580c2"/><path d="M51 367.5h3.2l0.8 1.6h6l0.8-1.6h3.2v6.3h-14z" fill="#efc878"/><path d="M54.2 367.9h7.6l-0.8 1.4h-6z" fill="#a8a8a8"/>
<path d="M54 389h8l3 3v6.5l-3 3h-8l-3-3v-6.5z" fill="#4580c2"/><rect x="54.5" y="391" width="6" height="8.5" fill="#fff"/><path d="M59 398l4-4.5" stroke="#6e6e6e" stroke-width="2"/><path d="M51 392v-2.3l0.7-0.7h2.3M65 392v-2.3l-0.7-0.7h-2.3M51 398.5v2.3l0.7 0.7h2.3M65 398.5v2.3l-0.7 0.7h-2.3" fill="none" stroke="#777" stroke-width="1"/>
<rect x="53.7" y="416.7" width="9" height="12" rx="1" fill="#efc878" stroke="#777" stroke-width="1.3"/><path d="M55.5 420.5h5.5M55.5 424.5h5.5" stroke="#fff" stroke-width="0.9"/><rect x="53" y="427.5" width="10.5" height="2" fill="#777"/>
<circle cx="62.5" cy="425.3" r="1.8" fill="#4580c2" stroke="#f7f7f7" stroke-width="0.6"/><path d="M59.3 430.6c0-2.2 1.4-3 3.2-3s3.2 0.8 3.2 3z" fill="#4580c2"/>
<path d="M51.4 449.4L64.5 447.4L61.9 453.6L58.4 452.1L56.2 454.3L55.9 451.2Z" fill="none" stroke="#8a8a8a" stroke-width="1.1" stroke-linejoin="round"/><path d="M55.9 451.2L64.3 447.7" stroke="#8a8a8a" stroke-width="0.9"/><path d="M55.8 450.9L58.6 452.2L56.2 454.4z" fill="#8a8a8a"/>
<path d="M51 472.5L65 479L51 485.5L53.8 479z" fill="#4580c2"/>
<path d="M58 507.5V503.0" stroke="#4580c2" stroke-width="2"/><path d="M54.5 504.0L58 500.5L61.5 504.0z" fill="#4580c2"/><path d="M51 507.5h3.2l0.8 1.6h6l0.8-1.6h3.2v6.3h-14z" fill="#efc878"/><path d="M54.2 507.9h7.6l-0.8 1.4h-6z" fill="#a8a8a8"/>
<circle cx="58" cy="535.4" r="7.2" fill="#4580c2"/><path d="M54.5 535.5l2.5 2.5 4.5-4.8" fill="none" stroke="#fff" stroke-width="1.8"/>
<path d="M52.7 556.6H60.2L63.3 559.7V569.2H52.7z" fill="#fff" stroke="#777" stroke-width="1.1"/><path d="M60.5 557v2.6h2.6" fill="none" stroke="#777" stroke-width="1.1"/><path d="M60 561.5h2M54 563.5h8M54 565.5h8M54 567.5h6" stroke="#777" stroke-width="1"/><path d="M54.3 562L56.5 558.2L58.7 562" fill="none" stroke="#4a80c4" stroke-width="1.2"/>
<path d="M19.8 588l4.4 4.2-4.4 4.2" fill="none" stroke="#333" stroke-width="1.4"/>
<rect x="45.5" y="584" width="6.3" height="5" rx="1" fill="#4580c2"/><rect x="37" y="588.5" width="6.3" height="4.4" rx="0.8" fill="#fff" stroke="#777" stroke-width="1.1"/><rect x="45.3" y="592.3" width="6" height="4.4" rx="0.8" fill="#fff" stroke="#777" stroke-width="1.1"/><path d="M43.3 590.7l2-2M43.3 590.7l2 2.3" stroke="#777" stroke-width="0.9"/>
<g><circle cx="47.2" cy="616.2" r="3" fill="#e9b8b0"/><path d="M43 624.5c0-3 1.8-4.3 4.2-4.3s4.2 1.3 4.2 4.3z" fill="#8a8a8a"/><circle cx="41.5" cy="617.5" r="3.3" fill="#d8b896" stroke="#f7f7f7" stroke-width="0.8"/><path d="M36.5 625c0-3.3 2-4.8 5-4.8s5 1.5 5 4.8z" fill="#3f7fc4" stroke="#f7f7f7" stroke-width="0.8"/></g>
<circle cx="569.6" cy="245.7" r="4.5" fill="none" stroke="#8c8c8c" stroke-width="1.1"/><path d="M572.9 249.29999999999998l4.8 4.6" stroke="#efc878" stroke-width="2.6"/>
<ellipse cx="608" cy="242.6" rx="6.6" ry="1.5" fill="none" stroke="#4580c2" stroke-width="1.3"/><path d="M601.2 243.2Q608 246 614.8 243.2L609.8 249.3V253.3Q609.6 254.9 607.6 255L606.4 254.8V249.3z" fill="#4580c2"/>
<path d="M656.2 246.8h7.6l-3.8 4.3z" fill="#333"/>
<circle cx="689.7" cy="245.7" r="4.7" fill="none" stroke="#8c8c8c" stroke-width="1.1"/><path d="M693 249.3l5 5.2" stroke="#efc878" stroke-width="2.6"/><path d="M694.2 243.5h5.6M697 240.7v5.6" stroke="#4580c2" stroke-width="1.8"/>
<path d="M782.3 246.8h7.8l-3.9 4.3z" fill="#333"/>
<path d="M656 277v11" stroke="#333" stroke-width="1.5"/><path d="M652.5 284.5l3.5 4 3.5-4" fill="none" stroke="#333" stroke-width="1.5"/>
<path d="M263.5 308.3l4.6 4.6 4.6-4.6" fill="none" stroke="#333" stroke-width="1.4"/>
<path d="M291.6 332.6H299.3L302.5 335.8V345.4H291.6z" fill="none" stroke="#7a7a7a" stroke-width="1.1" stroke-linejoin="miter"/><path d="M299.4 333V335.6H302.1" fill="none" stroke="#7a7a7a" stroke-width="1.1"/>
<path d="M322.4 343.8V335.1A3.05 3.05 0 0 0 316.3 335.1V344.5A2.2 2.2 0 0 0 320.7 344.5V336.8A1.15 1.15 0 0 0 318.4 336.8V341.8" fill="none" stroke="#7a7a7a" stroke-width="1.05"/>
<path d="M786 280h8l-4-5z" fill="#dedede"/>
<path d="M786 608.5h8l-4 5z" fill="#dedede"/>
<path d="M259.5 628l5-4.5v9z" fill="#333"/>
<path d="M776.5 628l-5-4.5v9z" fill="#333"/>
<path d="M1327.6 201.5v-5h12v11.3h-8" fill="none" stroke="#4580c2" stroke-width="1.2"/><rect x="1327.6" y="203.9" width="3.6" height="3.6" fill="#fff" stroke="#777" stroke-width="1.1"/><path d="M1331.5 203.5l4.5-4.5" stroke="#777" stroke-width="1.5"/><path d="M1333 198.5h4.3v4.3z" fill="#777"/>
<path d="M813.5 306.9H821.3L824.6 310.2V319.3H813.5z" fill="none" stroke="#7a7a7a" stroke-width="1.1"/><path d="M821.4 307.3V310.1H824.2" fill="none" stroke="#7a7a7a" stroke-width="1.1"/>
<path d="M920.5 306.9H928.3L931.6 310.2V319.3H920.5z" fill="#f7f7f7" stroke="#7a7a7a" stroke-width="1.1"/><path d="M928.4 307.3V310.1H931.2" fill="none" stroke="#7a7a7a" stroke-width="1.1"/>
<circle cx="839.5" cy="379.5" r="2.6" fill="#000"/>
<circle cx="839.5" cy="397.09999999999997" r="2.6" fill="#000"/>
<circle cx="839.5" cy="414.7" r="2.6" fill="#000"/>
<circle cx="839.5" cy="484.0" r="2.6" fill="#000"/>
<circle cx="839.5" cy="519.2" r="2.6" fill="#000"/>
<circle cx="1297.4" cy="653.5" r="5.6" fill="none" stroke="#fff" stroke-width="1.5"/><path d="M1295 645.5h5M1297.4 646v2M1297.4 650v3.8" stroke="#fff" stroke-width="1.4"/><path d="M1302.3 648.3l1.2-1.2" stroke="#fff" stroke-width="1.2"/>
<path d="M1309 648.5v4.3l6.3 6.2 4.6-4.6-6.3-6.2h-4.3z" fill="none" stroke="#fff" stroke-width="1.3" stroke-linejoin="round"/><circle cx="1311.3" cy="650.4" r="0.9" fill="#fff"/>
</svg>

</body></html>
